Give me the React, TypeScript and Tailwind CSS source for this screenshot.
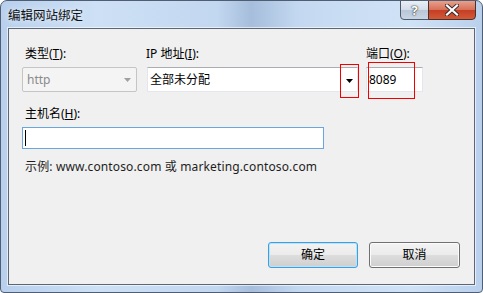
export default function App() {
  return (
    <div className="relative w-[483px] h-[293px]">
      {/* Window frame */}
      <div className="w-full h-full flex flex-col rounded-t-[7px] rounded-b-[4px] border border-[#4f5e72] bg-[linear-gradient(90deg,#b8d0ed_0%,#cde0f5_20%,#c2d7f0_45%,#a6bedc_52%,#c4d9f1_62%,#d0e2f6_85%,#b9d0ec_100%)] font-['Segoe_UI','Noto_Sans','Noto_Sans_CJK_SC',sans-serif] text-[12px] leading-[16px] text-black overflow-hidden">
        {/* Title bar */}
        <div className="h-[27px] flex items-start shrink-0">
          <span className="pl-[7px] pt-[7px] text-[12.5px] text-[#111] [text-shadow:0_0_6px_rgba(255,255,255,0.9)]">
            编辑网站绑定
          </span>
          <div className="ml-auto mr-[6px] -mt-px flex h-[20px]">
            <button className="w-[29px] h-full flex items-center justify-center rounded-bl-[4px] border border-[#4c5a6c] bg-[linear-gradient(180deg,#e9eff6_0%,#d3dde9_50%,#b8c6d7_51%,#c9d5e3_100%)] text-[13px] font-bold leading-none text-white [text-shadow:0_0_1px_#222,0_0_2px_#333]">
              ?
            </button>
            <button className="w-[48px] h-full -ml-px flex items-center justify-center rounded-br-[4px] border border-[#4c3030] bg-[linear-gradient(180deg,#e8a08c_0%,#d6705a_48%,#c63e24_52%,#d25a36_100%)]">
              <svg width="14" height="12" viewBox="0 0 14 12">
                <path d="M2 1.5 L12 10.5 M12 1.5 L2 10.5" stroke="#3a2a2a" strokeWidth="4" strokeLinecap="square" />
                <path d="M2 1.5 L12 10.5 M12 1.5 L2 10.5" stroke="#ffffff" strokeWidth="2.2" strokeLinecap="square" />
              </svg>
            </button>
          </div>
        </div>

        {/* Client area */}
        <div className="flex-1 mx-[7px] mb-[7px] flex flex-col border border-[#5e6673] bg-[#f0f0f0] pl-[13px] pr-[14px] pt-[17px] pb-[16px] shadow-[0_0_0_1px_rgba(255,255,255,0.6)]">
          {/* Row 1 */}
          <div className="flex">
            <div className="w-[115px] flex flex-col">
              <span className="pl-[3px]">
                类型(<span className="underline">T</span>):
              </span>
              <div className="mt-[5px] h-[25px] flex items-center rounded-[2px] border border-[#c5c5c5] bg-[#f4f4f4] pl-[4px] pr-[5px] text-[#8a8a8a]">
                <span>http</span>
                <svg className="ml-auto" width="7" height="4" viewBox="0 0 7 4">
                  <path d="M0 0 H7 L3.5 4 Z" fill="#a0a0a0" />
                </svg>
              </div>
            </div>

            <div className="w-[211px] ml-[10px] flex flex-col">
              <span className="-ml-px">
                IP 地址(<span className="underline">I</span>):
              </span>
              <div className="mt-[5px] h-[25px] flex items-center border border-[#e3e6ea] border-t-[#abadb3] bg-white pl-[2px] pr-[4px]">
                <span>全部未分配</span>
                <svg className="ml-auto mt-[2px]" width="7" height="4" viewBox="0 0 7 4">
                  <path d="M0 0 H7 L3.5 4 Z" fill="#000" />
                </svg>
              </div>
            </div>

            <div className="w-[57px] ml-[8px] flex flex-col">
              <span>
                端口(<span className="underline">O</span>):
              </span>
              <div className="mt-[5px] h-[25px] flex items-center border border-[#e3e6ea] border-t-[#abadb3] bg-white pl-[2px]">
                <span>8089</span>
              </div>
            </div>
          </div>

          {/* Host name */}
          <span className="mt-[14px] pl-[3px]">
            主机名(<span className="underline">H</span>):
          </span>
          <div className="mt-[5px] w-[302px] h-[22px] flex items-center border border-[#6aa6de] bg-white pl-[2px]">
            <div className="w-px h-[16px] bg-black" />
          </div>

          <span className="mt-[10px] pl-[3px] text-[#1e1e1e] tracking-[0.14px]">
            示例: www.contoso.com 或 marketing.contoso.com
          </span>

          {/* Buttons */}
          <div className="mt-auto flex justify-end gap-[11px]">
            <button className="w-[90px] h-[26px] rounded-[3px] border border-[#3d9ee0] bg-[linear-gradient(180deg,#f3f3f3_0%,#ebebeb_50%,#dddddd_51%,#cfcfcf_100%)] shadow-[inset_0_0_0_1px_#b8e3f8]">
              确定
            </button>
            <button className="w-[91px] h-[26px] rounded-[3px] border border-[#707070] bg-[linear-gradient(180deg,#f3f3f3_0%,#ebebeb_50%,#dddddd_51%,#cfcfcf_100%)] shadow-[inset_0_0_0_1px_#fcfcfc]">
              取消
            </button>
          </div>
        </div>
      </div>

      {/* Red annotation boxes */}
      <div className="absolute z-10 left-[340px] top-[64px] w-[19px] h-[34px] border border-[#f00000]" />
      <div className="absolute z-10 left-[368px] top-[62px] w-[47px] h-[37px] border border-[#f00000]" />
    </div>
  );
}
